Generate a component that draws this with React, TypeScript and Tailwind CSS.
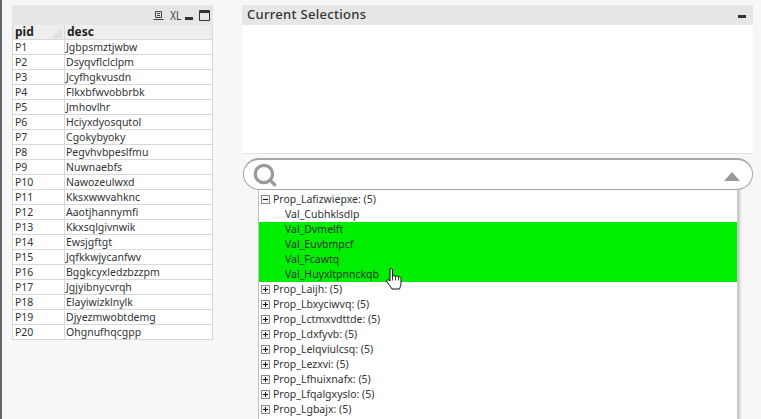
import { Search } from 'lucide-react'

const rows = [
  ['P1', 'Jgbpsmztjwbw'],
  ['P2', 'Dsyqvflclclpm'],
  ['P3', 'Jcyfhgkvusdn'],
  ['P4', 'Flkxbfwvobbrbk'],
  ['P5', 'Jmhovlhr'],
  ['P6', 'Hciyxdyosqutol'],
  ['P7', 'Cgokybyoky'],
  ['P8', 'Pegvhvbpeslfmu'],
  ['P9', 'Nuwnaebfs'],
  ['P10', 'Nawozeulwxd'],
  ['P11', 'Kksxwwvahknc'],
  ['P12', 'Aaotjhannymfi'],
  ['P13', 'Kkxsqlgivnwik'],
  ['P14', 'Ewsjgftgt'],
  ['P15', 'Jqfkkwjycanfwv'],
  ['P16', 'Bggkcyxledzbzzpm'],
  ['P17', 'Jgjyibnycvrqh'],
  ['P18', 'Elayiwizklnylk'],
  ['P19', 'Djyezmwobtdemg'],
  ['P20', 'Ohgnufhqcgpp'],
]

const values = [
  { name: 'Val_Cubhklsdlp', selected: false },
  { name: 'Val_Dvmelft', selected: true },
  { name: 'Val_Euvbmpcf', selected: true },
  { name: 'Val_Fcawtq', selected: true },
  { name: 'Val_Huyxltpnnckqb', selected: true },
]

const props = [
  'Prop_Laijh: (5)',
  'Prop_Lbxyciwvq: (5)',
  'Prop_Lctmxvdttde: (5)',
  'Prop_Ldxfyvb: (5)',
  'Prop_Lelqviulcsq: (5)',
  'Prop_Lezxvi: (5)',
  'Prop_Lfhuixnafx: (5)',
  'Prop_Lfqalgxyslo: (5)',
  'Prop_Lgbajx: (5)',
]

function TreeBox({ open }: { open?: boolean }) {
  return (
    <svg width="9" height="9" viewBox="0 0 9 9" className="shrink-0">
      <rect x="0.5" y="0.5" width="8" height="8" fill="#f2f2f2" stroke="#8a8a8a" />
      <path d="M2 4.5H7" stroke="#111" />
      {!open && <path d="M4.5 2V7" stroke="#111" />}
    </svg>
  )
}

export default function App() {
  return (
    <div className="relative w-[761px] h-[419px] overflow-hidden bg-[#f7f7f7] border-l-2 border-[#666] flex font-['Noto_Sans',sans-serif] text-[10.5px] text-[#333]">
      {/* Table box */}
      <div className="w-[201px] ml-[10px] mt-[5px] shrink-0">
        <div className="h-[20px] bg-[#e6e6e6] flex items-center justify-end gap-[6px] pr-[3px] text-[#444]">
          <svg width="11" height="11" viewBox="0 0 11 11" fill="none" stroke="#444">
            <path d="M2.5 1.5H8.5V7.5H2.5ZM4 3.5H7M4 5.5H7M0.5 9.5H10.5" />
          </svg>
          <span className="text-[13px] leading-none scale-x-75 w-[10px] -ml-[1px]">XL</span>
          <div className="w-[8px] h-[3px] bg-[#333] mt-[7px]" />
          <svg width="11" height="11" viewBox="0 0 11 11" fill="none" stroke="#333">
            <path d="M0.5 0.5H10.5V10.5H0.5Z" />
            <path d="M0 2H11" strokeWidth="2" />
          </svg>
        </div>
        <div className="border-l border-[#d8d8d8] border-r">
          <div className="h-[15px] flex bg-[#eeeeee] border-b border-[#d8d8d8] font-bold text-[12px] leading-[14px] text-[#222]">
            <div className="w-[52px] pl-[2px] border-r border-[#d8d8d8] flex justify-between pr-[2px]">
              <span>pid</span>
              <svg width="9" height="9" viewBox="0 0 9 9" className="mt-[4px]">
                <path d="M0 8.5H8.5V0Z" fill="#e2e2e2" stroke="#cfcfcf" strokeWidth="0.5" />
              </svg>
            </div>
            <div className="pl-[2px]">desc</div>
          </div>
          {rows.map(([pid, desc]) => (
            <div key={pid} className="h-[15px] flex bg-white border-b border-[#d8d8d8] leading-[14px] whitespace-nowrap">
              <div className="w-[52px] pl-[2px] border-r border-[#d8d8d8]">{pid}</div>
              <div className="pl-[1px]">{desc}</div>
            </div>
          ))}
        </div>
      </div>

      {/* Right column */}
      <div className="w-[511px] ml-[29px] mt-[5px] shrink-0">
        <div className="h-[20px] bg-[#e6e6e6] flex justify-between pl-[5px] pr-[7px] text-[13px] leading-[19px] font-medium tracking-[0.3px] text-[#333]">
          <span>Current Selections</span>
          <div className="w-[8px] h-[3px] bg-[#333] mt-[10px]" />
        </div>
        <div className="h-[129px] bg-white border-b border-[#e2e2e2]" />

        <div className="relative z-10 h-[32px] mt-[4px] ml-[1px] bg-white border border-[#a6a6a6] border-t-2 rounded-[16px] flex items-center justify-between pl-[8px] pr-[12px]">
          <Search size={26} strokeWidth={3} className="text-[#999]" />
          <div className="w-0 h-0 mt-[3px] border-x-[8px] border-x-transparent border-b-[9px] border-b-[#999]" />
        </div>

        {/* Tree dropdown */}
        <div className="w-[479px] h-[240px] ml-[16px] -mt-[1px] pt-[3px] bg-white border-l border-[#c0c0c0] shadow-[3px_0_2px_#c8c8c8]">
          <div className="h-[15px] flex items-center gap-[3px] pl-[2px] whitespace-nowrap">
            <TreeBox open />
            <span>Prop_Lafizwiepxe: (5)</span>
          </div>
          {values.map((v) => (
            <div
              key={v.name}
              className={`h-[15px] leading-[15px] pl-[26px] whitespace-nowrap ${v.selected ? 'bg-[#00ee00]' : ''}`}
            >
              {v.name}
            </div>
          ))}
          {props.map((p) => (
            <div key={p} className="h-[15px] flex items-center gap-[3px] pl-[2px] whitespace-nowrap">
              <TreeBox />
              <span>{p}</span>
            </div>
          ))}
        </div>
      </div>

      {/* Hand cursor over the hovered value */}
      <svg width="16" height="24" viewBox="0 0 16 23" className="absolute left-[384px] top-[267px] z-20">
        <path
          d="M4 1.5C5 0.5 6.5 1 6.5 2.5V9C7 8 9 8 9.5 9C10 8.2 12 8.2 12.5 9.5C13 9 15 9.3 15 11V16C15 18 14 19.5 13.5 21.5H6C5 19.5 3.5 18 1 14.5C0 13 1.5 11.5 3 12.5L4 13.5V2.5Z"
          fill="#fff"
          stroke="#111"
          strokeLinejoin="round"
        />
        <path d="M6.5 9V13M9.5 9V13M12.5 9.5V13" stroke="#111" strokeWidth="0.8" fill="none" />
      </svg>
    </div>
  )
}
